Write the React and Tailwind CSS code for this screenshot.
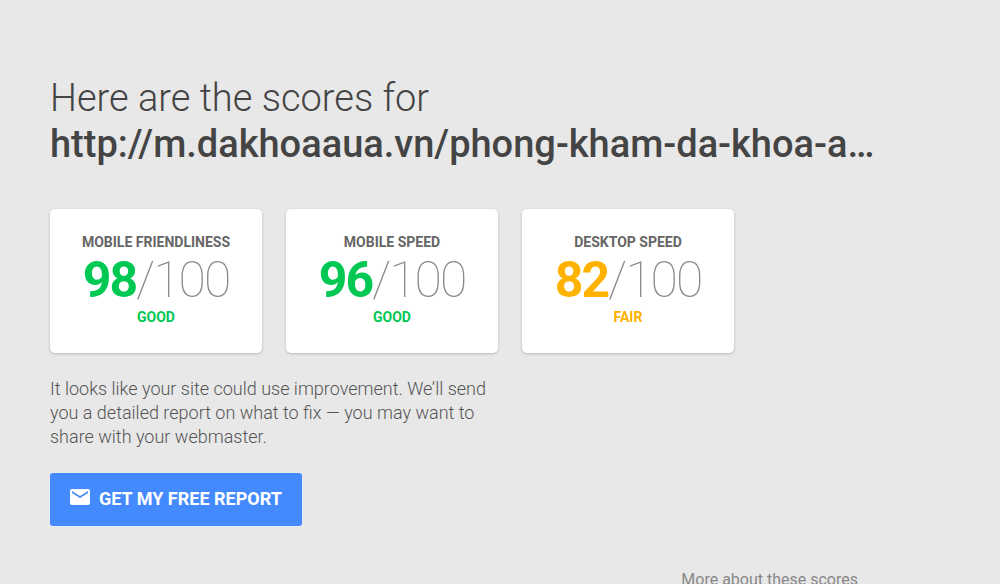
import React from "react";

const scores = [
  { label: "Mobile Friendliness", value: 98, rating: "Good", color: "text-[#00c853]" },
  { label: "Mobile Speed", value: 96, rating: "Good", color: "text-[#00c853]" },
  { label: "Desktop Speed", value: 82, rating: "Fair", color: "text-[#ffb300]" },
];

const ScoreCard = ({ label, value, rating, color }) => (
  <div className="w-[212px] pt-6 pb-[27px] bg-white rounded-[5px] shadow-[0_1px_3px_rgba(0,0,0,0.2)] text-center">
    <h2 className="text-sm leading-[18px] font-bold uppercase text-[#666666]">{label}</h2>
    <p className="pt-px text-[50px] leading-14 font-thin tracking-[-2px] text-[#8a8a8a]">
      <span className={`font-bold ${color}`}>{value}</span>/100
    </p>
    <p className={`text-sm leading-[18px] font-bold uppercase ${color}`}>{rating}</p>
  </div>
);

const App = () => {
  return (
    <div className="min-h-screen bg-[#e8e8e8] font-['Roboto',sans-serif] text-[#444444]">
      <main className="px-[50px] pt-[75px]">
        {/* Heading */}
        <h1 className="max-w-[832px] text-[38px] leading-[46px] font-light">
          Here are the scores for
          <span className="block truncate font-medium">
            http://m.dakhoaaua.vn/phong-kham-da-khoa-aua
          </span>
        </h1>

        {/* Scores */}
        <section className="mt-[42px] flex flex-wrap gap-6">
          {scores.map((score) => (
            <ScoreCard key={score.label} {...score} />
          ))}
        </section>

        <p className="mt-6 max-w-[450px] text-lg leading-6 font-light text-[#555555]">
          It looks like your site could use improvement. We’ll send you a
          detailed report on what to fix — you may want to share with your
          webmaster.
        </p>

        <button
          type="button"
          className="mt-6 flex items-start px-5 pt-3 pb-[13px] rounded-[3px] bg-[#448aff] text-white text-lg leading-7 font-bold uppercase"
        >
          <svg viewBox="2 4 20 16" className="w-5 h-4 mt-1 mr-[9px] fill-current">
            <path d="M20 4H4c-1.100 0-1.990.900-1.990 2L2 18c0 1.100.900 2 2 2h16c1.100 0 2-.900 2-2V6c0-1.100-.900-2-2-2zm0 4l-8 5-8-5V6l8 5 8-5v2z" />
          </svg>
          Get my free report
        </button>

        <div className="mt-11 max-w-[808px] text-right">
          <a href="#scores" className="block text-base leading-5 text-[#888888]">
            More about these scores
          </a>
        </div>
      </main>
    </div>
  );
};

export default App;
